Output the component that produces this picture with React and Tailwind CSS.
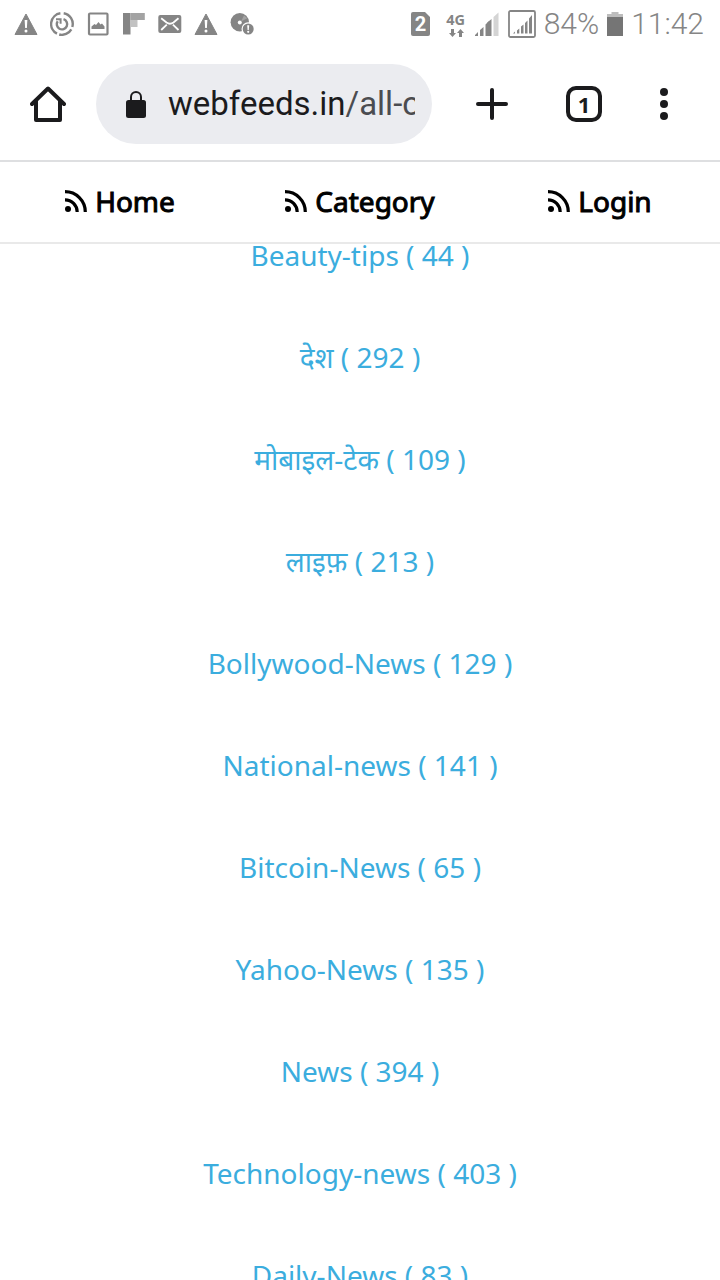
const categories = [
  { name: "Beauty-tips", count: 44 },
  { name: "देश", count: 292 },
  { name: "मोबाइल-टेक", count: 109 },
  { name: "लाइफ़", count: 213 },
  { name: "Bollywood-News", count: 129 },
  { name: "National-news", count: 141 },
  { name: "Bitcoin-News", count: 65 },
  { name: "Yahoo-News", count: 135 },
  { name: "News", count: 394 },
  { name: "Technology-news", count: 403 },
  { name: "Daily-News", count: 83 },
];

const navItems = ["Home", "Category", "Login"];

function WarningIcon() {
  return (
    <svg className="h-6 w-6" viewBox="0 0 24 24">
      <path d="M12 2 23 22.5H1Z" fill="#858585" stroke="#858585" strokeLinejoin="round" />
      <path d="M10.6 8h2.8l-.5 8h-1.8z" fill="#fff" />
      <circle cx="12" cy="19" r="1.5" fill="#fff" />
    </svg>
  );
}

function SyncIcon() {
  return (
    <svg className="h-6 w-6" viewBox="0 0 24 24" fill="none" stroke="#858585" strokeWidth="2.4">
      <path d="M10.4 1.3A10.8 10.8 0 0 0 7 21.6" />
      <path d="M9.2 22.5A10.8 10.8 0 0 0 21.3 17.3" />
      <path d="M13.7 1.3A10.8 10.8 0 0 1 22.3 15" />
      <path d="M13.5 7.2A5.2 5.2 0 1 1 7.7 9.2" />
      <path d="M6 7.2h4.6v4.6" strokeWidth="2" />
    </svg>
  );
}

function ImageIcon() {
  return (
    <svg className="h-6 w-6" viewBox="0 0 24 24">
      <rect x="3" y="1.5" width="18.5" height="21" rx="1" fill="none" stroke="#858585" strokeWidth="2.2" />
      <path d="M5.5 17v-2.5l3-2.5 1.5 1 2.5-3 2 2.5 1.5-1 2.5 3V17z" fill="#858585" />
    </svg>
  );
}

function FlipboardIcon() {
  return (
    <svg className="h-6 w-6" viewBox="0 0 24 24">
      <path d="M1 1h7.5v21.5H1z" fill="#858585" />
      <path d="M8.5 1h14.3v7H8.5z" fill="#a3a3a3" />
      <path d="M8.5 8h7v7h-7z" fill="#c2c2c2" />
    </svg>
  );
}

function MailIcon() {
  return (
    <svg className="h-6 w-6" viewBox="0 0 24 24" fill="none">
      <rect x=".3" y="3" width="23" height="18" rx="2" fill="#858585" />
      <path d="M3.2 6.3 8.5 10.5Q12 13 15.5 10.5L20.5 6.3M3.2 18l5.6-5.4M20.5 18l-5.6-5.4" stroke="#fff" strokeWidth="1.8" />
    </svg>
  );
}

function DiscIcon() {
  return (
    <svg className="h-6 w-6" viewBox="0 0 24 24">
      <circle cx="9.8" cy="10.3" r="9.2" fill="#858585" />
      <circle cx="9.8" cy="10.5" r="2" fill="#fff" />
      <path d="M11 9.5 14 3.5l3.3 2.8z" fill="#a3a3a3" />
      <circle cx="18.2" cy="17" r="6.7" fill="#fff" />
      <circle cx="18.2" cy="17" r="5.5" fill="#858585" />
      <path d="M17.2 13.2h2l-.4 4.8h-1.2z" fill="#fff" />
      <circle cx="18.2" cy="19.8" r="1.1" fill="#fff" />
    </svg>
  );
}

function StatusBar() {
  return (
    <div className="flex h-12 items-center justify-between pr-4 pl-3.5">
      <div className="flex items-center gap-3">
        <WarningIcon />
        <SyncIcon />
        <ImageIcon />
        <FlipboardIcon />
        <MailIcon />
        <WarningIcon />
        <DiscIcon />
      </div>

      <div className="flex items-center text-[#858585]">
        {/* SIM slot */}
        <svg className="mr-4 h-6 w-[19px]" viewBox="0 0 19 24">
          <path d="M2 0h12l5 5v17a2 2 0 0 1-2 2H2a2 2 0 0 1-2-2V2a2 2 0 0 1 2-2z" fill="#858585" />
          <text x="9.6" y="19" textAnchor="middle" fill="#fff" fontFamily="Roboto, sans-serif" fontSize="20" fontWeight="700">2</text>
        </svg>
        <div className="mr-[9px] flex w-5 flex-col items-center">
          <span className="font-['Open_Sans',sans-serif] text-[14.5px] leading-[15px] font-bold">4G</span>
          <svg className="mt-0.5 h-2 w-4" viewBox="0 0 16 8" fill="#858585">
            <path d="M3 0h3v4h2L4.5 8 1 4h2zM11 8h3V4h2l-3.500-4L9 4h2z" />
          </svg>
        </div>
        <svg className="mr-[9px] h-6 w-6" viewBox="0 0 24 24" fill="#858585">
          <path d="M0 24v-1l3-3v4zM5 24v-6l3.500-3v9zM10.500 24V12.500l4-4V24z" />
          <path d="M12 24V11l4.500-4v17z" />
          <path d="M18.500 24V5L23.500.500V24z" fill="#d4d4d4" />
        </svg>
        <svg className="mr-2 h-7 w-7" viewBox="0 0 28 28" fill="#858585">
          <rect x="1" y="1" width="26" height="26" rx="1.500" fill="none" stroke="#858585" strokeWidth="1.800" />
          <path d="M5 23.500l2-2v2zM9 23.500v-3l2.300-2v5zM13 23.500v-7l2.500-2v9zM17 23.500V13l2.500-2.500v13zM21 23.500V8.500L24 5v18.500z" />
        </svg>
        <span className="font-[Roboto,sans-serif] text-[30px] leading-none font-light">84%</span>
        <svg className="mx-2 h-6 w-4" viewBox="0 0 16 24">
          <path d="M4.500 0h7v2H16v4H0V2h4.500z" fill="#bdbdbd" />
          <path d="M0 5h16v19H0z" fill="#757575" />
        </svg>
        <span className="font-[Roboto,sans-serif] text-[30px] leading-none font-light">11:42</span>
      </div>
    </div>
  );
}

function BrowserToolbar() {
  return (
    <div className="flex h-[114px] items-center border-b-2 border-[#dedfe1] font-[Roboto,sans-serif] text-[#1b1b1d]">
      <svg className="mx-[30px] h-9 w-9" viewBox="0 0 36 36" fill="none" stroke="currentColor" strokeWidth="4" strokeLinecap="round" strokeLinejoin="round">
        <path d="M2 18 18 2.500 34 18" />
        <path d="M6 15v19h24V15" />
      </svg>
      <div className="flex h-20 w-[336px] items-center rounded-full bg-[#ebecf0] pr-[17px] pl-[30px]">
        <svg className="mr-[22px] h-[27px] w-5 shrink-0" viewBox="0 0 20 27">
          <rect y="9" width="20" height="18" rx="2.500" fill="currentColor" />
          <path d="M5 10V6a5 5 0 0 1 10 0v4" fill="none" stroke="currentColor" strokeWidth="2" />
        </svg>
        <span className="overflow-hidden text-[33px] leading-[44px] whitespace-nowrap">
          webfeeds.in<span className="text-[#4b4c50]">/all-c</span>
        </span>
      </div>
      <svg className="ml-11 h-8 w-8" viewBox="0 0 32 32" stroke="currentColor" strokeWidth="4" strokeLinecap="round">
        <path d="M16 2v28M2 16h28" />
      </svg>
      <div className="ml-[58px] flex h-9 w-9 items-center justify-center rounded-[10px] border-4 border-[#1b1b1d] font-['Noto_Sans',sans-serif] text-[22px] leading-none font-bold">
        1
      </div>
      <svg className="ml-[58px] h-8 w-2" viewBox="0 0 8 32" fill="currentColor">
        <circle cx="4" cy="4" r="4" />
        <circle cx="4" cy="16" r="4" />
        <circle cx="4" cy="28" r="4" />
      </svg>
    </div>
  );
}

function RssIcon() {
  return (
    <svg className="h-[22px] w-[22px]" viewBox="0 0 22 22" fill="none" stroke="#000" strokeWidth="3.200">
      <circle cx="3" cy="19" r="3" fill="#000" stroke="none" />
      <path d="M0 9.800A12.200 12.200 0 0 1 12.200 22" />
      <path d="M0 1.700A20.300 20.300 0 0 1 20.300 22" />
    </svg>
  );
}

function SiteNav() {
  return (
    <nav className="grid h-[82px] grid-cols-3 border-b-2 border-[#e9e9e9]">
      {navItems.map((item) => (
        <a key={item} href="#" className="flex items-center justify-center gap-2 pb-0.5 text-[28px] text-black">
          <RssIcon />
          <span className="[-webkit-text-stroke:1px_#000]">{item}</span>
        </a>
      ))}
    </nav>
  );
}

function App() {
  return (
    <div className="flex h-screen flex-col overflow-hidden bg-white font-['Noto_Sans',sans-serif]">
      <StatusBar />
      <BrowserToolbar />
      <SiteNav />
      <main className="min-h-0 flex-1 overflow-hidden">
        <ul className="-mt-10">
          {categories.map(({ name, count }) => (
            <li key={name} className="flex h-[102px] items-center justify-center">
              <a href="#" className="text-[28px] leading-10 text-[#3badde]">
                {name} ( {count} )
              </a>
            </li>
          ))}
        </ul>
      </main>
    </div>
  );
}

export default App;
